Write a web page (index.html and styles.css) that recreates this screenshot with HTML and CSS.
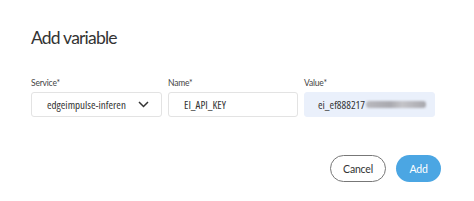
FILE: index.html
```html
<!DOCTYPE html>
<html>
<head>
<meta charset="utf-8">
<link rel="stylesheet" href="styles.css">
</head>
<body>
<div class="dialog">
  <h1 class="title">Add variable</h1>
  <div class="fields">
    <div class="field">
      <label class="label">Service*</label>
      <div class="box select">
        <span class="val">edgeimpulse-inferen</span>
        <svg class="chev" width="11" height="7" viewBox="0 0 11 7"><path d="M1 1 L5.5 5.5 L10 1" fill="none" stroke="#333" stroke-width="1.5"/></svg>
      </div>
    </div>
    <div class="field">
      <label class="label">Name*</label>
      <div class="box"><span class="val">EI_API_KEY</span></div>
    </div>
    <div class="field">
      <label class="label">Value*</label>
      <div class="box filled"><span class="val">ei_ef888217</span><span class="blur"></span></div>
    </div>
  </div>
  <div class="actions">
    <button class="btn cancel">Cancel</button>
    <button class="btn add">Add</button>
  </div>
</div>
</body>
</html>
```
FILE: styles.css
```css
html, body { margin: 0; padding: 0; background: #fff; }
body { font-family: "Lato", "Liberation Sans", sans-serif; color: #333; }
.dialog { width: 474px; height: 201px; padding: 27px 33px 0 31px; box-sizing: border-box; }
.title { margin: 0; font-size: 17.5px; font-weight: 400; color: #333; line-height: 22px; letter-spacing: -0.8px; }
.fields { display: grid; grid-template-columns: 131px 130px 131px; column-gap: 6px; margin-top: 29px; }
.field { display: flex; flex-direction: column; }
.label { font-size: 8.5px; color: #444; line-height: 11px; margin-bottom: 3px; letter-spacing: -0.2px; }
.box { height: 25px; box-sizing: border-box; border: 1px solid #e3e3e3; border-radius: 3px; display: flex; align-items: center; padding: 0 13px 0 15px; font-size: 11px; color: #333; white-space: nowrap; }
.val { font-family: "Open Sans", "Lato", sans-serif; font-stretch: 80%; }
.select { justify-content: space-between; padding-right: 12px; }
.chev { flex: none; }
.filled { background: #eaf0fb; border-color: #eaf0fb; padding-left: 13px; }
.blur { flex: none; display: inline-block; height: 7px; width: 60px; margin-left: 1px; background: linear-gradient(90deg, #b9b9be, #a9a9af 40%, #c4c4c8 60%, #a8a8ae); filter: blur(1.3px); border-radius: 3px; }
.actions { display: flex; justify-content: flex-end; gap: 10px; margin-top: 38px; }
.btn { height: 27px; border-radius: 14px; font-family: inherit; font-size: 10.5px; padding: 0; letter-spacing: -0.2px; }
.cancel { width: 56px; background: #fff; border: 1px solid #777; color: #333; }
.add { width: 45px; background: #4ba6e3; border: none; color: #fff; }
```
